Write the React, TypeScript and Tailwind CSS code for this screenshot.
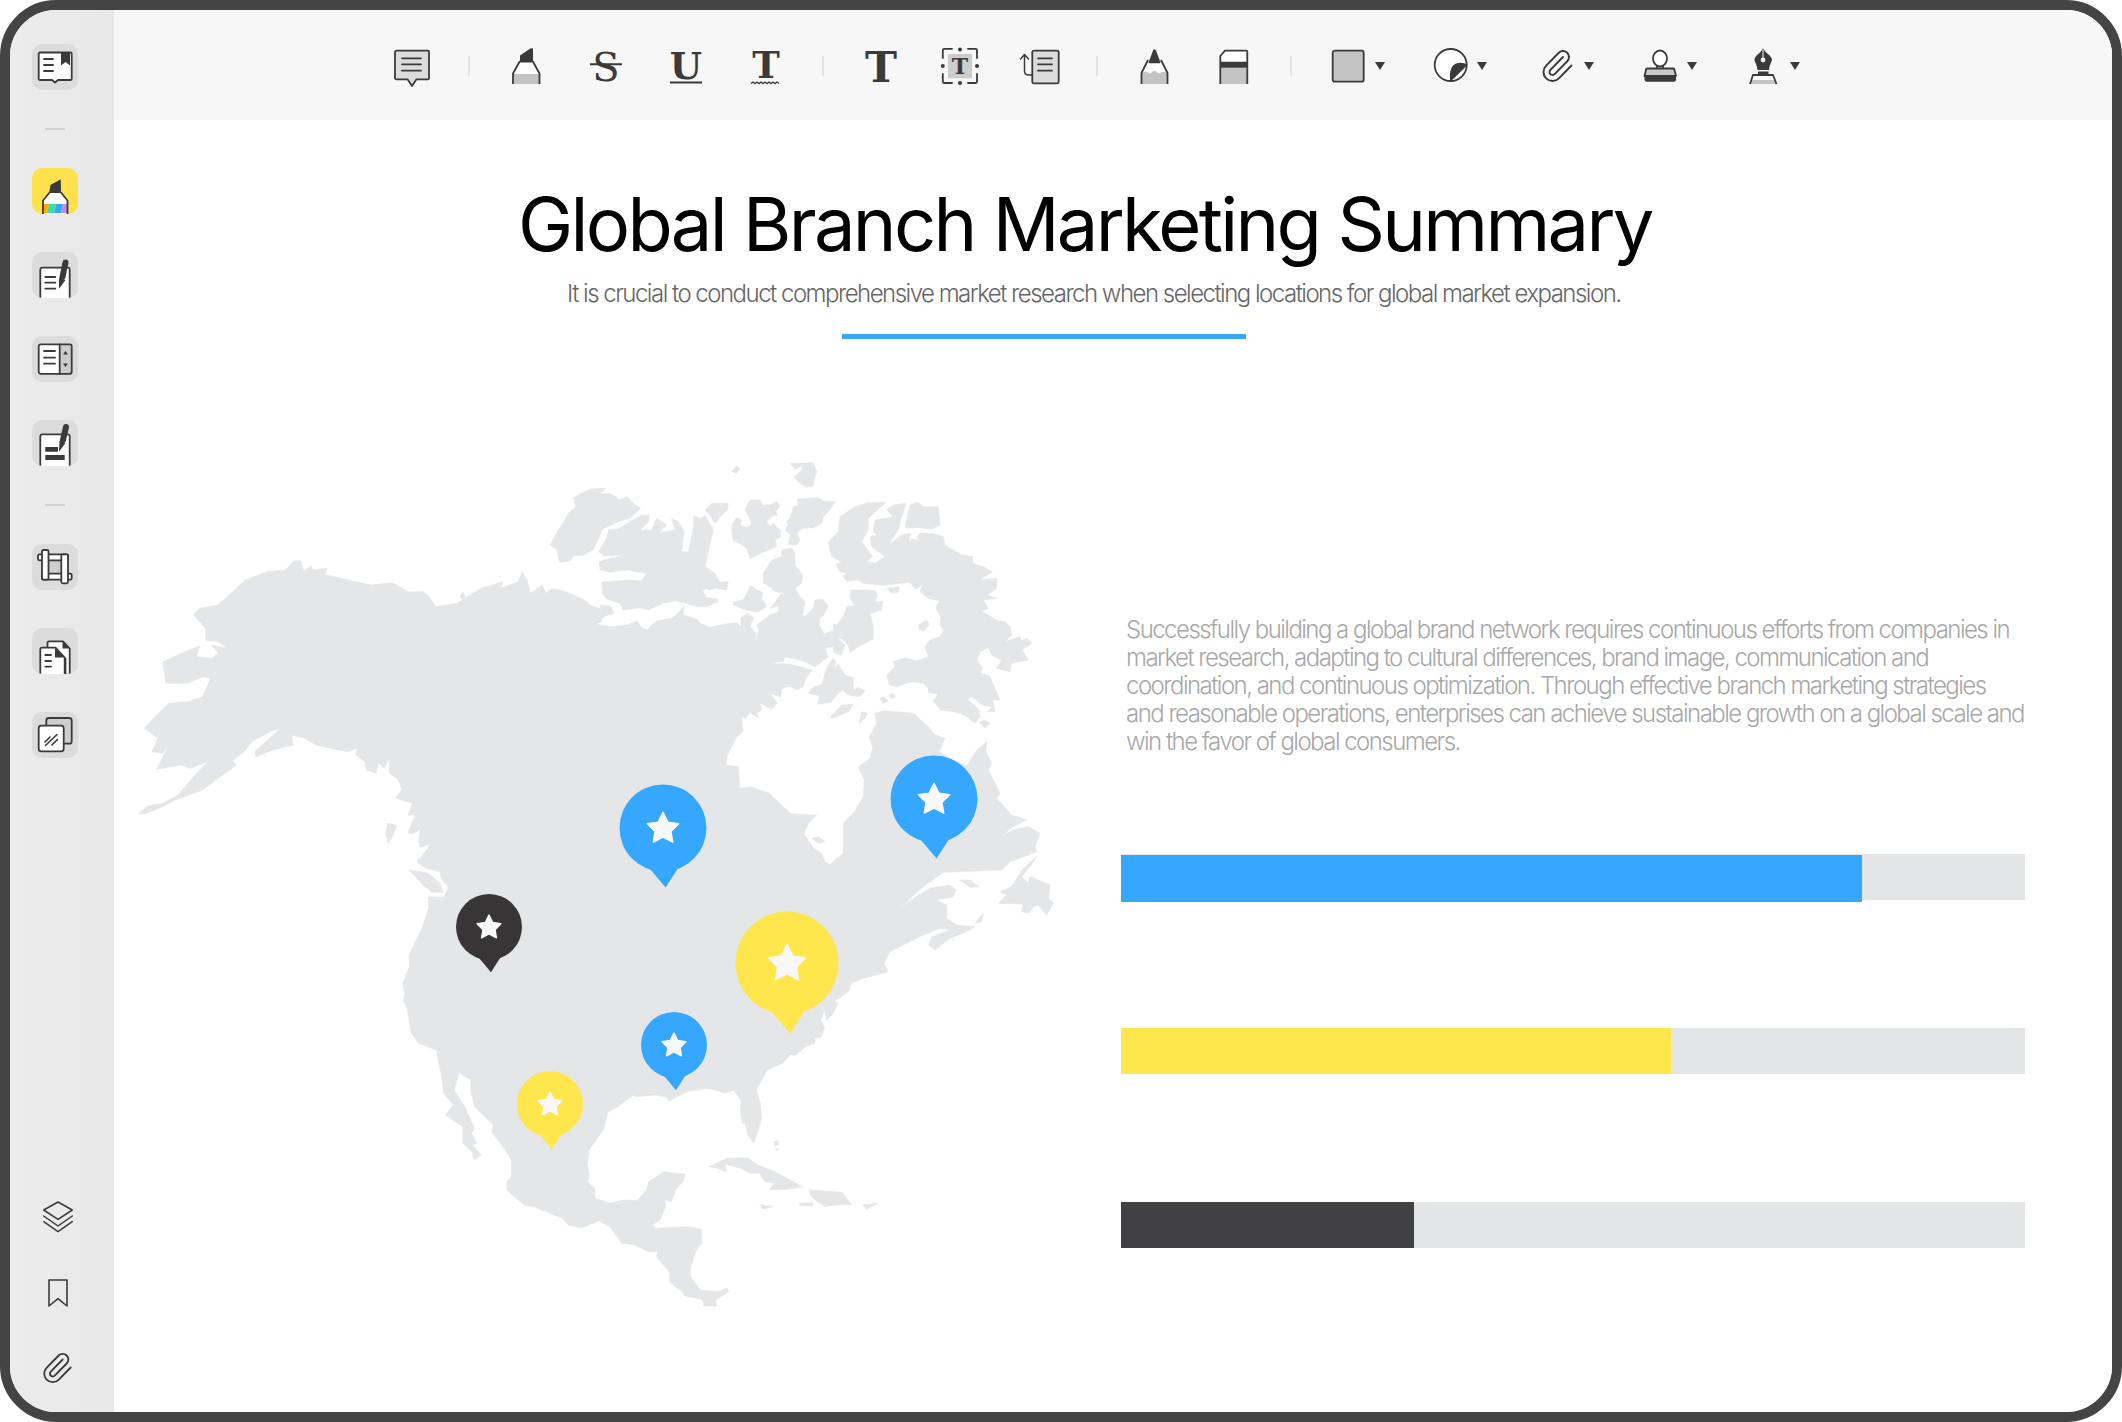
import { Paperclip } from 'lucide-react'
import type { ReactNode } from 'react'

const DARK = '#3a3a3a'

// coasts are traced from crops of the map, each list keeps its crop's own scale
type Crop = [number, number, number, number]
const Z5: Crop = [120, 440, 1 / 1.633, 1 / 3]
const Z6: Crop = [350, 860, 1 / 2.613, 1 / 3]
const Z9: Crop = [540, 455, 1 / 3, 1 / 3]
const Z10: Crop = [780, 680, 1 / 3, 1 / 3]

const pts = (raw: string, [ox, oy, sx, sy]: Crop) =>
  raw
    .trim()
    .split(/\s+/)
    .map((p) => {
      const [x, y] = p.split(',').map(Number)
      return `${(ox + x * sx).toFixed(1)} ${(oy + y * sy).toFixed(1)}`
    })

const poly = (...parts: string[][]) => 'M' + parts.flat().join('L') + 'Z'

const mainland = poly(
  pts(
    `490,1255 507,1213 490,1222 488,1195 490,1168 478,1182 470,1178 482,1125 470,1125 478,1090 450,1075 460,1050 455,1020 440,1000 440,955 432,985 422,970 418,1000 402,990 400,965 385,945 388,925 370,935 320,915 300,893 280,885 283,915 250,930 222,950 220,935 262,865 245,875 215,905 205,932 183,962 190,975 160,1015 135,1050 90,1080 70,1100 40,1122 30,1122 45,1098 70,1090 95,1065 120,1010 143,965 115,985 100,975 70,985 60,988 80,915 70,940 52,935 62,895 40,865 65,815 80,790 110,785 135,770 148,715 135,710 110,730 75,730 70,665 100,640 130,618 125,650 150,655 160,640 150,615 175,625 160,605 140,600 140,565 120,525 130,505 160,495 205,420 240,395 270,390 285,362 295,362 300,392 312,378 315,390 338,385 335,405 350,410 385,425 410,435 445,428 470,455 495,455 505,470 515,500 550,490 590,445 625,425 622,445 650,425 657,395 665,420 670,460 690,435 695,460`,
    Z5,
  ),
  pts(
    `40,400 80,412 130,432 150,450 182,462 180,450 210,452 222,475 198,482 185,490 185,500 168,507 210,515 262,510 290,497 305,518 322,525 335,510 352,498 395,490 418,472 432,452 430,480 470,492 480,505 510,517 570,505 590,503 603,515 602,490 622,475 640,487 630,515 648,535 645,555 657,525 650,510 690,480 715,472 718,452 692,460 722,418 738,415 705,410 690,395 670,385 670,355 695,315 725,305 725,285 755,280 765,295 765,330 788,360 785,385 765,400 780,425 795,440 787,480 795,485 820,460 825,435 848,432 865,452 850,482 838,490 838,510 852,537 880,527 880,505 890,512 912,480 920,455 945,452 930,430 932,405 975,405 1005,407 1012,420 1005,440 1028,440 1025,465 990,475 1000,515 1000,552 960,572 930,592 925,572 905,550 895,552 915,570 903,600 882,592 880,575 855,578 865,605 825,635 790,618 735,605 730,618 690,625 750,628 815,645 795,675 790,695 770,705 750,693 725,702 722,725 690,715 712,745 695,762 660,745 665,765 650,775 657,790 628,772 617,790 605,785 608,830 590,845 562,900`,
    Z9,
  ),
  pts(`990,975 1010,980 1012,1045 1030,1040 1060,1060 1095,1120`, Z5),
  pts(
    `40,402 110,405 85,430 72,462 100,505 125,520 135,545 150,555 170,535 190,520 190,430 225,392 250,350 253,300 235,260 270,235 278,205 268,170 290,130 285,100 310,92 400,100 445,140 465,165 495,175 478,215 520,240 560,258 590,210 620,185 617,215 635,250 625,270 660,340 650,355 695,405 740,420 700,440 660,470 700,450 745,440 780,460 765,500 770,515 720,535 690,545 665,570 490,577 430,620 350,692 400,655 450,625 510,615 528,630 520,650 470,660 500,675 500,715 530,735 585,740 560,755 510,775 465,810 447,795 455,770 510,750 480,745 430,765 380,790 330,815 312,850 325,875 270,890`,
    Z10,
  ),
  pts(
    `1340,355 1310,370 1305,390 1280,415 1265,420 1275,432 1260,465 1245,480 1240,450 1230,480 1240,500 1232,530 1215,535 1215,550 1190,560 1165,585 1150,585 1130,610 1090,630 1062,690 1072,730 1075,780 1055,850 1040,825 1032,790 1025,790 1020,760 1022,720 1002,690 980,700 955,690 930,685 910,690 880,695 835,722 825,710 800,705 745,710 740,705 700,740 675,755 662,810 625,870 620,910 625,945 620,965 640,985 640,1015 680,1030 715,1020 750,1022 775,990 780,965 820,935 875,942 870,965 850,990 840,1025 823,1020 825,1040 810,1080 790,1095 800,1105 880,1100 918,1108 920,1150 905,1170 890,1220 890,1250 915,1290 960,1295 985,1285 990,1295 955,1320 958,1338 925,1338 920,1318 875,1308 870,1295 850,1280 835,1265 835,1235 800,1190 805,1175 780,1175 745,1155 710,1150 680,1100 650,1083 605,1103 570,1095 555,1075 480,1040 455,1035 410,990 410,965 422,950 422,900 400,860 370,815 375,795 325,740 315,690 315,660 285,638 272,690 300,740 325,805 318,820 330,850 320,855 343,885 325,900 318,875 295,850 295,800 275,785 250,765 270,735 245,700 240,650 225,570 180,550 160,520 150,450 140,420 143,395 138,370 155,320 155,285 190,200 205,145 205,110 245,112 258,82 238,55 235,35 200,25 178,10 175,0`,
    Z6,
  ),
)

const islands: [string, Crop][] = [
  ['575,50 590,32 600,42 590,55 580,52', Z9],
  ['750,25 820,23 830,50 822,75 820,92 800,97 775,80 762,65 785,45 788,32 765,42', Z9],
  ['100,130 125,113 155,102 198,100 180,118 205,115 230,125 235,135 262,125 285,150 302,160 270,190 240,198 210,212 188,222 160,285 130,300 100,303 90,318 58,322 52,285 30,270 55,225 70,205 85,175 108,155', Z9],
  ['178,285 200,250 205,225 235,222 270,200 305,180 328,182 325,200 300,225 335,225 350,190 380,210 355,235 405,225 395,190 415,200 432,228 425,290 445,290 460,220 462,182 482,190 495,182 520,225 495,335 525,355 540,382 565,380 560,405 525,400 510,405 498,400 488,410 500,425 485,425 530,432 535,440 500,455 470,455 440,445 405,437 370,445 325,465 300,458 250,465 240,445 200,432 188,415 185,382 220,378 270,375 305,378 320,355 285,350 265,345 210,352 180,345 178,320 215,308 255,303 225,300 195,303 175,290', Z9],
  ['495,165 515,145 565,145 562,165 540,185 525,205 510,180', Z9],
  ['578,205 590,188 605,195 600,210 620,218 635,205 625,180 615,165 630,135 660,135 665,150 690,150 710,140 720,152 708,170 712,180 695,185 680,200 690,215 700,205 720,225 722,245 705,255 710,275 685,285 660,295 630,312 620,280 600,265 580,258 575,225', Z9],
  ['760,155 775,150 772,132 805,130 835,128 850,138 885,140 870,165 850,185 845,205 820,218 790,220 770,232 780,255 770,270 745,268 752,240 735,225 745,210 740,200 750,190', Z9],
  ['580,440 610,435 632,390 650,405 668,412 665,430 680,455 650,472 610,462 580,450', Z9],
  ['1040,390 1108,382 1128,403 1148,388 1140,410 1165,430 1198,437 1188,460 1203,487 1200,510 1210,525 1200,545 1170,555 1155,575 1165,605 1130,618 1095,608 1060,620 1065,635 1040,660 1048,690 1070,695 1115,680 1150,685 1165,700 1165,712 1195,718 1180,738 1200,765 1240,770 1275,780 1305,805 1320,785 1318,765 1285,735 1265,710 1280,735 1295,725 1325,750 1358,755 1340,770 1365,770 1358,735 1380,735 1350,665 1345,660 1320,655 1328,640 1310,615 1320,590 1345,578 1355,600 1385,615 1370,640 1410,650 1415,625 1465,615 1447,585 1475,565 1460,550 1445,558 1440,545 1395,560 1415,540 1410,515 1395,500 1370,495 1325,468 1345,460 1330,435 1370,430 1340,420 1370,400 1370,370 1320,375 1358,350 1330,335 1298,325 1298,305 1265,300 1215,270 1210,245 1175,235 1140,235 1130,245 1140,255 1115,252 1108,265 1110,235 1085,240 1045,270 1075,225 1082,195 1098,145 1060,150 1040,165 1060,185 1040,190 1005,195 1000,230 1012,240 990,245 995,275 1035,305 1020,315 1005,325 995,320 978,322 998,305 965,260 985,225 985,190 1038,142 985,143 945,155 900,185 895,230 865,262 875,305 905,320 888,328 900,350 920,355 908,365 920,378 955,375 970,385 1020,390', Z9],
  ['1110,150 1135,142 1150,155 1195,155 1200,210 1175,222 1140,218 1095,218', Z9],
  ['1040,400 1078,395 1075,412 1055,415', Z9],
  ['1135,510 1160,495 1168,510 1150,528 1137,522', Z9],
  ['878,610 888,620 882,640 895,628 915,660 940,668 940,705 955,697 975,708 958,725 925,720 908,705 890,720 872,742 833,748 838,722 805,715 815,700 845,688 860,640', Z9],
  ['872,785 905,750 940,748 925,770 895,782 875,790', Z9],
  ['958,800 965,770 982,775 975,790 960,805', Z9],
  ['1020,730 1030,725 1045,738 1028,745', Z9],
  ['1047,722 1057,715 1068,725 1055,730', Z9],
  ['1318,802 1335,795 1350,805 1335,820', Z9],
  ['95,475 115,470 135,485 115,490', Z10],
  ['770,530 730,565 695,620 660,635 680,645 655,670 730,672 725,695 745,700 760,680 775,675 785,690 800,705 820,670 805,655 810,615 750,590 745,610 725,590 750,560', Z10],
  ['540,600 570,600 598,620 570,622', Z10],
  ['585,730 610,700 605,725', Z10],
  ['155,30 205,40 235,70 243,97 215,97 190,75', Z6],
  ['437,1150 452,1155 445,1190 438,1212 434,1180', Z5],
  ['555,470 560,455 564,472 558,478', Z5],
  ['938,920 985,895 1040,893 1065,915 1110,935 1150,960 1185,982 1120,990 1095,988 1110,970 1085,965 1070,940 1045,940 1020,925 980,912 982,935 960,925', Z6],
  ['1200,990 1285,997 1310,1033 1265,1035 1240,1040 1205,1010', Z6],
  ['1172,1030 1210,1028 1208,1038 1180,1037', Z6],
  ['1340,1035 1380,1030 1350,1048', Z6],
  ['1070,1033 1105,1040 1080,1047', Z6],
  ['1108,845 1118,842 1120,855 1110,858', Z6],
  ['1112,870 1118,865 1118,872', Z6],
]

// narrow channels that run through the land
const channels: [string, Crop][] = [
  ['420,1002 430,1030 432,1062 427,1072 422,1035', Z5],
  ['438,1008 452,1028 450,1062 442,1035', Z5],
  ['345,482 355,490 380,482 415,468 395,468 370,478 352,490', Z9],
]

const star = (cx: number, cy: number, R: number) => {
  const out: string[] = []
  for (let i = 0; i < 10; i++) {
    const rad = i % 2 ? R * 0.5 : R
    const a = -Math.PI / 2 + (i * Math.PI) / 5
    out.push(`${(cx + rad * Math.cos(a)).toFixed(1)} ${(cy + rad * Math.sin(a)).toFixed(1)}`)
  }
  return 'M' + out.join('L') + 'Z'
}

const pins = [
  { cx: 663, cy: 828, r: 43.5, color: '#36a7ff' },
  { cx: 934, cy: 799, r: 43.5, color: '#36a7ff' },
  { cx: 489, cy: 927, r: 33, color: '#373535' },
  { cx: 787, cy: 963, r: 51.5, color: '#ffe64d' },
  { cx: 674, cy: 1045, r: 33, color: '#36a7ff' },
  { cx: 550, cy: 1104, r: 33, color: '#ffe64d' },
]

function NorthAmerica() {
  return (
    <svg className="ml-[16px] shrink-0" width={930} height={870} viewBox="130 450 930 870">
      <path d={mainland} fill="#e5e6e8" stroke="#e5e6e8" strokeWidth={0.6} strokeLinejoin="round" />
      {islands.map(([raw, crop], i) => (
        <path key={i} d={poly(pts(raw, crop))} fill="#e5e6e8" stroke="#e5e6e8" strokeWidth={0.6} strokeLinejoin="round" />
      ))}
      {channels.map(([raw, crop], i) => (
        <path key={i} d={poly(pts(raw, crop))} fill="#fff" />
      ))}
      {pins.map((p) => (
        <g key={`${p.cx}-${p.cy}`}>
          <circle cx={p.cx} cy={p.cy} r={p.r} fill={p.color} />
          <path
            d={`M${p.cx - p.r * 0.32} ${p.cy + p.r * 0.92}L${p.cx + p.r * 0.06} ${p.cy + p.r * 1.37}L${p.cx + p.r * 0.36} ${p.cy + p.r * 0.9}Z`}
            fill={p.color}
          />
          <path d={star(p.cx, p.cy + p.r * 0.02, p.r * 0.38)} fill="#f8f8f8" stroke="#f8f8f8" strokeWidth={1.5} strokeLinejoin="round" />
        </g>
      ))}
    </svg>
  )
}

function Ico({ size = 36, children }: { size?: number; children: ReactNode }) {
  return (
    <svg width={size} height={size} viewBox={`0 0 ${size} ${size}`} className="overflow-visible shrink-0" fill="none">
      {children}
    </svg>
  )
}

const s = { stroke: DARK, strokeWidth: 1.8, strokeLinejoin: 'round' as const, strokeLinecap: 'round' as const }

function SlabLetter({ x, y, size, weight = 700, children }: { x: number; y: number; size: number; weight?: number; children: string }) {
  return (
    <text x={x} y={y} fontSize={size} textAnchor="middle" fill={DARK} fontWeight={weight} fontFamily="'DejaVu Serif', serif">
      {children}
    </text>
  )
}

function Lines({ x1, x2, ys }: { x1: number; x2: number; ys: number[] }) {
  return (
    <>
      {ys.map((y) => (
        <path key={y} d={`M${x1} ${y}H${x2}`} {...s} />
      ))}
    </>
  )
}

/* top toolbar icons */
const CommentIcon = () => (
  <Ico>
    <path d="M2.5 2.7H34a1 1 0 0 1 1 1V30.3a1 1 0 0 1-1 1H22.5L18 38l-4.5-6.7H2.5a1.5 1.5 0 0 1-1.5-1.5V4.2a1.5 1.5 0 0 1 1.5-1.5Z" fill="#dcdcdc" {...s} />
    <Lines x1={8} x2={27} ys={[10.3, 16.3, 22.7]} />
  </Ico>
)
const HighlighterIcon = () => (
  <Ico>
    <path d="M5 36V25.5L11.5 13.7H25L31.5 25.5V36Z" fill="#fff" />
    <path d="M5 26H31.5V36H5Z" fill="#c4c4c4" />
    <path d="M5 36V25.5L11.5 13.7H25L31.5 25.5V36" {...s} strokeLinecap="butt" />
    <path d="M12 13.7V7.5L22.7 .3 25 .5V13.7Z" fill={DARK} />
  </Ico>
)
const StrikeIcon = () => (
  <Ico>
    <SlabLetter x={18} y={33} size={40} weight={400}>S</SlabLetter>
    <path d="M2 16.3H34" stroke={DARK} strokeWidth={2} />
  </Ico>
)
const UnderlineIcon = () => (
  <Ico>
    <SlabLetter x={18} y={31} size={37}>U</SlabLetter>
    <path d="M2 34.5H34" stroke={DARK} strokeWidth={2} />
  </Ico>
)
const SquiggleIcon = () => (
  <Ico>
    <SlabLetter x={18} y={30} size={37}>T</SlabLetter>
    <path d="M3 35.5l2-1.5 2 1.5 2-1.5 2 1.5 2-1.5 2 1.5 2-1.5 2 1.5 2-1.5 2 1.5 2-1.5 2 1.5 2-1.5 2 1.5" stroke={DARK} strokeWidth={1.4} />
  </Ico>
)
const TextIcon = () => (
  <Ico>
    <SlabLetter x={19} y={34} size={43}>T</SlabLetter>
  </Ico>
)
const TextBoxIcon = () => (
  <Ico>
    <path d="M6 6H30V30.3H6Z" fill="#cdcdcd" />
    <path d="M10 .8H2.3A1.5 1.5 0 0 0 .8 2.3V10M26 .8H33.5A1.5 1.5 0 0 1 35 2.3V10M.8 26V33.5A1.5 1.5 0 0 0 2.3 35H10M35 26V33.5A1.5 1.5 0 0 1 33.5 35H26" {...s} />
    <circle cx={18} cy={1.5} r={2} fill={DARK} />
    <circle cx={18} cy={35} r={2} fill={DARK} />
    <circle cx={0.8} cy={18} r={2} fill={DARK} />
    <circle cx={35} cy={18} r={2} fill={DARK} />
    <SlabLetter x={18} y={26} size={22}>T</SlabLetter>
  </Ico>
)
const CalloutIcon = () => (
  <Ico>
    <path d="M12 2.7H35A1.7 1.7 0 0 1 36.7 4.4V33.5A1.7 1.7 0 0 1 35 35.3H12A1.7 1.7 0 0 1 10.300 33.5V4.4A1.7 1.7 0 0 1 12 2.7Z" fill="#dcdcdc" {...s} />
    <Lines x1={16} x2={30} ys={[10.3, 16.3, 22.7]} />
    <path d="M10 27H6.500Q2.500 27 2.500 23V7M-1.5 11L2.500 6.500 6.500 11" {...s} strokeWidth={1.5} />
  </Ico>
)
const PencilIcon = () => (
  <Ico>
    <path d="M5.5 36V25L18.5 1.5 31.5 25V36Z" fill="#c4c4c4" />
    <path d="M5.5 25L11.5 14H25.5L31.5 25 27 23.5 23 25.5 18.5 22.5 14 25.5 10 23.5Z" fill="#fff" />
    <path d="M12.5 15.3L17 2.500Q18.5 0 20 2.500L24.5 15.3Z" fill={DARK} />
    <path d="M5.5 36V25L12 12M31.5 36V25L25 12" {...s} strokeLinecap="butt" />
  </Ico>
)
const EraserIcon = () => (
  <Ico>
    <path d="M4.3 36V8L9 2.7H30.3A1 1 0 0 1 31.3 3.7V36Z" fill="#fff" />
    <path d="M4.3 19.7H31.3V36H4.3Z" fill="#c4c4c4" />
    <path d="M4.3 13.7H31.3V19.7H4.3Z" fill={DARK} />
    <path d="M4.3 36V8L9 2.7H30.3A1 1 0 0 1 31.3 3.7V36" {...s} strokeLinecap="butt" />
  </Ico>
)
const ShapeIcon = () => (
  <Ico>
    <rect x={2.7} y={2.7} width={31} height={31} rx={2} fill="#c4c4c4" {...s} />
  </Ico>
)
const StickerIcon = () => (
  <Ico>
    <circle cx={18.7} cy={17} r={16} fill="#fff" {...s} />
    <path d="M18.5 33.7C16.5 25 19 16 26 15 30 14.5 33 15 35.5 17Z" fill={DARK} />
  </Ico>
)
const ClipIcon = () => <Paperclip size={36} strokeWidth={1.3} color={DARK} className="shrink-0" />
const StampIcon = () => (
  <Ico>
    <ellipse cx={18} cy={10.5} rx={7} ry={8} fill="#fff" {...s} />
    <path d="M15 18.5V21H21V18.5" {...s} />
    <path d="M5 20.5H31Q32.5 20.5 32.5 22L34 28H2.5L4 22Q4 20.5 5 20.5Z" fill="#c9c9c9" {...s} />
    <path d="M2.5 28H34V31.5Q34 33.7 32 33.7H4.5Q2.5 33.7 2.5 31.5Z" fill={DARK} />
  </Ico>
)
const PenIcon = () => (
  <Ico>
    <path d="M18 .3C20 5 27 8 27 11.5 27 14 24.5 16 24 22H12.5C12 16 9.5 14 9.5 11.5 9.5 8 16 5 18 .3Z" fill={DARK} />
    <circle cx={18} cy={12} r={2.4} fill="#f7f7f7" />
    <path d="M18 2V10" stroke="#f7f7f7" strokeWidth={1} />
    <path d="M13 25H23.5" stroke={DARK} strokeWidth={3} />
    <path d="M8 27.5H28L31.5 36H5Z" fill="#fff" />
    <path d="M6.5 32H30L31.5 36H5Z" fill="#c4c4c4" />
    <path d="M5 36L8 27H28L31.5 36" {...s} strokeLinecap="butt" />
  </Ico>
)

/* sidebar tile icons, 46 x 46 */
const BookTile = () => (
  <Ico size={46}>
    <path d="M8 8.5H38.3A1.3 1.3 0 0 1 39.7 10V34.5A1.3 1.3 0 0 1 38.3 36H26L23 38.5 20 36H8A1.3 1.3 0 0 1 6.7 34.5V10A1.3 1.3 0 0 1 8 8.5Z" fill="#fff" {...s} />
    <path d="M29 8.5H38V21.5L33.5 18 29 21.5Z" fill={DARK} />
    <Lines x1={12} x2={21} ys={[15, 21, 27]} />
  </Ico>
)
const HighlightTile = () => (
  <Ico size={46}>
    <path d="M11 46V32.5L18 24H28.5L35.5 32.5V46Z" fill="#fff" />
    <path d="M11.5 36H17L15 45H11.5Z" fill="#ffa800" />
    <path d="M17 36H24L22 45H15Z" fill="#3fdca0" />
    <path d="M24 36H31L29 45H22Z" fill="#36a7ff" />
    <path d="M31 36H35V45H29Z" fill="#c08cff" />
    <path d="M11 46V32.5L18 24H28.5L35.5 32.5V46" {...s} strokeLinecap="butt" />
    <path d="M17.5 23L18.5 17 28.7 11.3 29 23Z" fill={DARK} />
  </Ico>
)
const NoteTile = () => (
  <Ico size={46}>
    <path d="M8.3 46V17.5A2 2 0 0 1 10.3 15.7H36A1.7 1.7 0 0 1 37.7 17.5V46Z" fill="#fff" />
    <path d="M8.3 46V17.5A2 2 0 0 1 10.3 15.7H36A1.7 1.7 0 0 1 37.7 17.5V46" {...s} strokeLinecap="butt" />
    <Lines x1={13.3} x2={23.3} ys={[25, 30.7, 36.7]} />
    <path d="M33.5 10.5L30.5 25" stroke={DARK} strokeWidth={6} strokeLinecap="round" />
    <path d="M27 26L33.5 28 27 36.7Z" fill={DARK} />
  </Ico>
)
const SplitTile = () => (
  <Ico size={46}>
    <rect x={6.7} y={8.3} width={33} height={29.5} rx={2} fill="#fff" />
    <path d="M27.7 8.3H37.7A2 2 0 0 1 39.7 10.3V35.8A2 2 0 0 1 37.7 37.8H27.7Z" fill="#cdcdcd" />
    <rect x={6.7} y={8.3} width={33} height={29.5} rx={2} {...s} />
    <path d="M27.7 8.3V37.8" {...s} />
    <Lines x1={12} x2={23} ys={[15, 21.7, 27.7]} />
    <path d="M33.5 15L36 18.5H31ZM33.5 31L36 27.5H31Z" fill={DARK} />
  </Ico>
)
const RedactTile = () => (
  <Ico size={46}>
    <path d="M8.3 46V16A2 2 0 0 1 10.3 14.3H36A1.7 1.7 0 0 1 37.7 16V46Z" fill="#fff" />
    <path d="M8.3 46V16A2 2 0 0 1 10.3 14.3H36A1.7 1.7 0 0 1 37.7 16V46" {...s} strokeLinecap="butt" />
    <path d="M13.3 27H26V31.7H13.3ZM13.3 35H32.7V40H13.3Z" fill={DARK} />
    <path d="M34 7L31 20" stroke={DARK} strokeWidth={6} strokeLinecap="round" />
    <path d="M27.5 21L33.5 23 27 31.7Z" fill={DARK} />
  </Ico>
)
const CropTile = () => (
  <Ico size={46}>
    <rect x={16} y={16} width={14} height={14} fill="#cdcdcd" />
    <rect x={6} y={10.3} width={30} height={6} rx={1.5} fill="#fff" {...s} />
    <rect x={10} y={29.7} width={29.7} height={6} rx={1.5} fill="#fff" {...s} />
    <rect x={10} y={6} width={6.5} height={29.7} rx={1.5} fill="#fff" {...s} />
    <rect x={29.3} y={10.3} width={6.7} height={29} rx={1.5} fill="#fff" {...s} />
  </Ico>
)
const DocsTile = () => (
  <Ico size={46}>
    <path d="M15.5 45V14.5A1.5 1.5 0 0 1 17 13.3H31L37.7 20.5V45Z" fill="#fff" />
    <path d="M15.5 20V14.5A1.5 1.5 0 0 1 17 13.3H31L37.7 20.5V46M33.5 46V30" {...s} strokeLinecap="butt" />
    <path d="M30.5 13.3L37.7 20.5H30.5Z" fill={DARK} />
    <path d="M8.3 46V21A1.5 1.5 0 0 1 10 19.7H23.5L32.7 29.5V46Z" fill="#fff" />
    <path d="M8.3 46V21A1.5 1.5 0 0 1 10 19.7H23.5L32.7 29.5V46" {...s} strokeLinecap="butt" />
    <path d="M23 19.7L32.7 29.5H23Z" fill={DARK} />
    <Lines x1={13.3} x2={19} ys={[27, 33, 38.7]} />
  </Ico>
)
const CopiesTile = () => (
  <Ico size={46}>
    <rect x={14.3} y={6} width={25.4} height={25.7} rx={2.5} fill="#cdcdcd" {...s} />
    <rect x={6.7} y={13.7} width={25} height={25.6} rx={2.5} fill="#fff" {...s} />
    <path d="M13 30L18 25M13.5 33.5L25 22.500M20 33L25.5 27.5" {...s} strokeWidth={1.6} />
  </Ico>
)

const LayersIcon = () => (
  <Ico>
    <path d="M18 3L32.3 11 18 20.3 3.7 11Z" {...s} strokeWidth={1.5} />
    <path d="M3.7 17L18 27 32.3 17M3.7 22.7L18 32.7 32.3 22.7" {...s} strokeWidth={1.5} />
  </Ico>
)
const BookmarkIcon = () => (
  <Ico>
    <path d="M9 5H27V31L18 23.7 9 31Z" {...s} strokeWidth={1.6} />
  </Ico>
)

function ToolSlot({ w, children }: { w: string; children: ReactNode }) {
  return <div className={`${w} shrink-0 flex items-center justify-center`}>{children}</div>
}
const Sep = () => (
  <div className="w-[34px] shrink-0 flex justify-center">
    <div className="w-[2px] h-[20px] bg-[#e3e3e3]" />
  </div>
)
const Caret = () => <div className="w-0 h-0 border-x-[5.5px] border-x-transparent border-t-[8px] border-t-[#3a3a3a]" />

function Dropdown({ w, children }: { w: string; children: ReactNode }) {
  return (
    <div className={`${w} shrink-0 flex items-center gap-[9px]`}>
      {children}
      <Caret />
    </div>
  )
}

function Toolbar() {
  return (
    <div className="h-[110px] shrink-0 bg-[#f7f7f7] flex items-center pl-[258px] pt-[2px]">
      <ToolSlot w="w-[80px]"><CommentIcon /></ToolSlot>
      <Sep />
      <ToolSlot w="w-[80px]"><HighlighterIcon /></ToolSlot>
      <ToolSlot w="w-[80px]"><StrikeIcon /></ToolSlot>
      <ToolSlot w="w-[80px]"><UnderlineIcon /></ToolSlot>
      <ToolSlot w="w-[80px]"><SquiggleIcon /></ToolSlot>
      <Sep />
      <ToolSlot w="w-[80px]"><TextIcon /></ToolSlot>
      <ToolSlot w="w-[80px]"><TextBoxIcon /></ToolSlot>
      <ToolSlot w="w-[80px]"><CalloutIcon /></ToolSlot>
      <Sep />
      <ToolSlot w="w-[80px]"><PencilIcon /></ToolSlot>
      <ToolSlot w="w-[80px]"><EraserIcon /></ToolSlot>
      <Sep />
      <div className="w-[22px] shrink-0" />
      <Dropdown w="w-[102px]"><ShapeIcon /></Dropdown>
      <Dropdown w="w-[107px]"><StickerIcon /></Dropdown>
      <Dropdown w="w-[103px]"><ClipIcon /></Dropdown>
      <Dropdown w="w-[103px]"><StampIcon /></Dropdown>
      <Dropdown w="w-[102px]"><PenIcon /></Dropdown>
    </div>
  )
}

const Tile = ({ active, children }: { active?: boolean; children: ReactNode }) => (
  <div className={`w-[46px] h-[46px] rounded-[10px] overflow-hidden ${active ? 'bg-[#ffe14d]' : 'bg-[#dcdcdc]'}`}>{children}</div>
)
const Dash = () => <div className="w-[20px] h-[2px] ml-[13px] bg-[#d2d2d2]" />

function Sidebar() {
  return (
    <aside className="w-[104px] shrink-0 flex flex-col bg-gradient-to-r from-[#ececec] to-[#e8e8e8]">
      <div className="flex flex-col gap-[38px] pl-[22px] pt-[34px]">
        <Tile><BookTile /></Tile>
        <Dash />
        <Tile active><HighlightTile /></Tile>
        <Tile><NoteTile /></Tile>
        <Tile><SplitTile /></Tile>
        <Tile><RedactTile /></Tile>
        <Dash />
        <Tile><CropTile /></Tile>
        <Tile><DocsTile /></Tile>
        <Tile><CopiesTile /></Tile>
      </div>
      <div className="mt-auto flex flex-col gap-[40px] pl-[30px] pb-[27px]">
        <LayersIcon />
        <BookmarkIcon />
        <Paperclip size={34} strokeWidth={1.3} color={DARK} />
      </div>
    </aside>
  )
}

const bars = [
  { fill: 'w-[741px] bg-[#36a7ff] h-[47px] mt-[1px]' },
  { fill: 'w-[550px] bg-[#ffe64d] h-[46px]' },
  { fill: 'w-[293px] bg-[#414042] h-[46px]' },
]

export default function App() {
  return (
    <div className="w-[2122px] h-[1422px] bg-white font-['Inter',sans-serif]">
      <div className="w-full h-full border-[10px] border-[#444444] rounded-[56px] overflow-hidden flex">
        <Sidebar />
        <main className="flex-1 min-w-0 flex flex-col bg-white">
          <Toolbar />
          <h1 className="ml-[404px] mt-[64px] text-[74px] leading-[80px] font-normal tracking-[-2.68px] text-black whitespace-nowrap">
            Global Branch Marketing Summary
          </h1>
          <p className="ml-[453px] mt-[14px] text-[24px] leading-[32px] font-light tracking-[-1.51px] text-[#666666] whitespace-nowrap">
            It is crucial to conduct comprehensive market research when selecting locations for global market expansion.
          </p>
          <div className="ml-[728px] mt-[24px] w-[404px] h-[5px] bg-[#36a7ff]" />
          <div className="flex mt-[111px]">
            <NorthAmerica />
            <div className="ml-[61px] w-[904px] pt-[166px]">
              <p className="pl-[5px] text-[24px] leading-[28px] font-light tracking-[-1.53px] text-[#a8a8a8] whitespace-nowrap">
                Successfully building a global brand network requires continuous efforts from companies in
                <br />
                market research, adapting to cultural differences, brand image, communication and
                <br />
                coordination, and continuous optimization. Through effective branch marketing strategies
                <br />
                and reasonable operations, enterprises can achieve sustainable growth on a global scale and
                <br />
                win the favor of global consumers.
              </p>
              <div className="flex flex-col gap-[128px] mt-[98px]">
                {bars.map((b) => (
                  <div key={b.fill} className="h-[46px] bg-[#e4e5e6]">
                    <div className={b.fill} />
                  </div>
                ))}
              </div>
            </div>
          </div>
        </main>
      </div>
    </div>
  )
}
